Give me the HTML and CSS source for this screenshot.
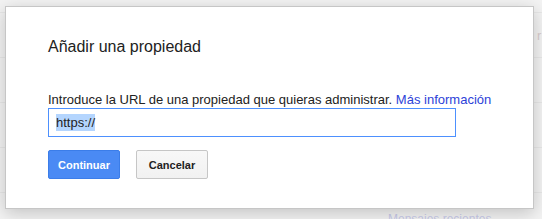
FILE: index.html
```html
<!DOCTYPE html>
<html lang="es">
<head>
  <meta charset="UTF-8">
  <title>Añadir una propiedad</title>
  <link rel="stylesheet" href="styles.css">
</head>
<body>
  <div class="page">
    <div class="row row-first"></div>
    <div class="row row-peek"><span class="peek">r</span></div>
    <div class="row"></div>
    <div class="row"></div>
    <div class="row"></div>
    <div class="row row-last"><span class="recent">Mensajes recientes</span></div>
  </div>

  <div class="modal">
    <h2 class="modal-title">Añadir una propiedad</h2>
    <p class="modal-text">Introduce la URL de una propiedad que quieras administrar. <a href="#">Más información</a></p>
    <div class="url-field"><span class="selected">https://</span></div>
    <div class="actions">
      <button class="btn btn-primary">Continuar</button>
      <button class="btn btn-default">Cancelar</button>
    </div>
  </div>
</body>
</html>
```

FILE: styles.css
```css
body {
  margin: 0;
  font-family: Arial, "Liberation Sans", sans-serif;
  background: #f3f3f3;
  color: #222;
  overflow: hidden;
}
.page {
  height: 219px;
  overflow: hidden;
}
.row {
  height: 45px;
  border-bottom: 1px solid #e8e8e8;
  box-sizing: border-box;
}
.row-first {
  height: 13px;
}
.row-peek {
  padding: 15px 0 0 537px;
  font-size: 13px;
  line-height: 16px;
}
.peek {
  color: #d9cdcd;
}
.row-last {
  border-bottom: none;
  padding: 19px 0 0 388px;
  font-size: 12px;
  line-height: 14px;
}
.recent {
  color: #c9cbea;
}
.modal {
  position: absolute;
  left: 5px;
  top: 6px;
  width: 485px;
  height: 171px;
  background: #fff;
  border: 1px solid #c6c6c6;
  box-shadow: 0 4px 16px rgba(0, 0, 0, 0.2);
  padding: 30px 0 0 42px;
}
.modal-title {
  margin: 0;
  font-size: 16px;
  line-height: 20px;
  font-weight: normal;
  color: #222;
}
.modal-text {
  margin: 35px 0 0;
  font-size: 13px;
  line-height: 16px;
}
.modal-text a {
  color: #2c42d8;
  text-decoration: none;
}
.url-field {
  width: 408px;
  height: 29px;
  box-sizing: border-box;
  border: 1px solid #4d90fe;
  padding: 0 0 0 7px;
  font-size: 13px;
  line-height: 27px;
  color: #222;
}
.selected {
  background: #b4d5fe;
  padding: 1px 0;
}
.actions {
  display: flex;
  gap: 16px;
  margin-top: 13px;
}
.btn {
  width: 72px;
  height: 29px;
  box-sizing: border-box;
  border-radius: 2px;
  font-family: Arial, "Liberation Sans", sans-serif;
  font-size: 11px;
  font-weight: bold;
  padding: 0;
  cursor: pointer;
}
.btn-primary {
  background: #4a8af4;
  border: 1px solid #3b7de9;
  color: #fff;
}
.btn-default {
  background: linear-gradient(#f8f8f8, #f1f1f1);
  border: 1px solid #c6c6c6;
  color: #222;
}
```
